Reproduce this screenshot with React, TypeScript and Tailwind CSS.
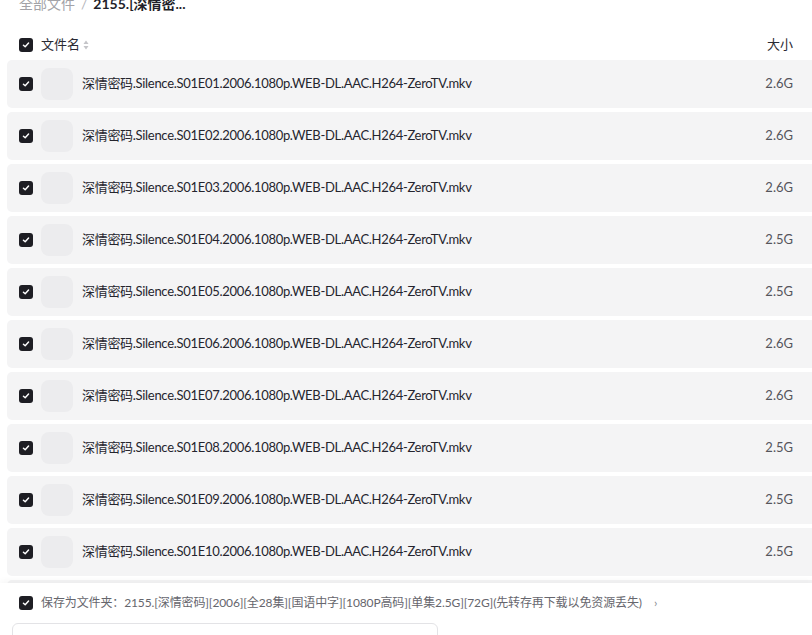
import React from "react";

const files = [
  { ep: "01", size: "2.6G" },
  { ep: "02", size: "2.6G" },
  { ep: "03", size: "2.6G" },
  { ep: "04", size: "2.5G" },
  { ep: "05", size: "2.5G" },
  { ep: "06", size: "2.6G" },
  { ep: "07", size: "2.6G" },
  { ep: "08", size: "2.5G" },
  { ep: "09", size: "2.5G" },
  { ep: "10", size: "2.5G" },
  { ep: "11", size: "2.5G" },
];

function Check() {
  return (
    <span className="flex h-[14px] w-[14px] shrink-0 items-center justify-center rounded-[3px] bg-[#1e1e24]">
      <svg width="8" height="8" viewBox="0 0 10 10" fill="none">
        <path d="M1.8 5.2 L4 7.3 L8.2 2.6" stroke="white" strokeWidth="1.8" strokeLinecap="round" strokeLinejoin="round" />
      </svg>
    </span>
  );
}

export default function App() {
  return (
    <div
      className="flex h-[635px] w-[812px] flex-col overflow-hidden bg-white"
      style={{ fontFamily: 'Lato, "Noto Sans CJK SC", sans-serif' }}
    >
      <div className="min-h-0 flex-1 overflow-hidden">
        <div className="-mt-[6px] flex h-[20px] items-center pl-[19px] text-[14px] leading-[20px]">
          <span className="text-[#a3a3a8]">全部文件</span>
          <span className="mx-[6px] text-[#b5b5ba]">/</span>
          <span className="font-bold text-[#1f1f2a]">2155.[深情密...</span>
        </div>
        <div className="mt-[16px] flex h-[30px] items-center pl-[19px] pr-[19px] text-[13px] text-[#2a2a33]">
          <Check />
          <span className="ml-[8px]">文件名</span>
          <svg className="ml-[3px]" width="6" height="10" viewBox="0 0 6 10">
            <path d="M3 0.5 L5.5 4 L0.5 4 Z" fill="#c4c4c8" />
            <path d="M3 9.5 L5.5 6 L0.5 6 Z" fill="#c4c4c8" />
          </svg>
          <span className="ml-auto">大小</span>
        </div>
        <div className="flex flex-col gap-[4px] pl-[7px]">
          {files.map((f) => (
            <div
              key={f.ep}
              className="flex h-[48px] shrink-0 items-center rounded-l-[5px] bg-[#f4f4f5] pl-[12px] pr-[19px]"
            >
              <Check />
              <div className="ml-[8px] h-[32px] w-[32px] shrink-0 rounded-[8px] bg-[#ececee]" />
              <span className="ml-[9px] text-[13px] tracking-[-0.3px] text-[#25252e]">
                深情密码.Silence.S01E{f.ep}.2006.1080p.WEB-DL.AAC.H264-ZeroTV.mkv
              </span>
              <span className="ml-auto text-[13px] text-[#55555c]">{f.size}</span>
            </div>
          ))}
        </div>
      </div>
      <div className="relative h-[52px] shrink-0 bg-white shadow-[0_-2px_6px_rgba(0,0,0,0.04)]">
        <div className="flex h-[40px] items-center pl-[19px] text-[12px] text-[#66666d]">
          <Check />
          <span className="ml-[8px] tracking-[-0.12px]">
            保存为文件夹：2155.[深情密码][2006][全28集][国语中字][1080P高码][单集2.5G][72G](先转存再下载以免资源丢失)
          </span>
          <span className="ml-[12px] text-[#88888e]">›</span>
        </div>
        <div className="ml-[12px] h-[40px] w-[426px] rounded-[6px] border border-[#e3e3e6]" />
      </div>
    </div>
  );
}
